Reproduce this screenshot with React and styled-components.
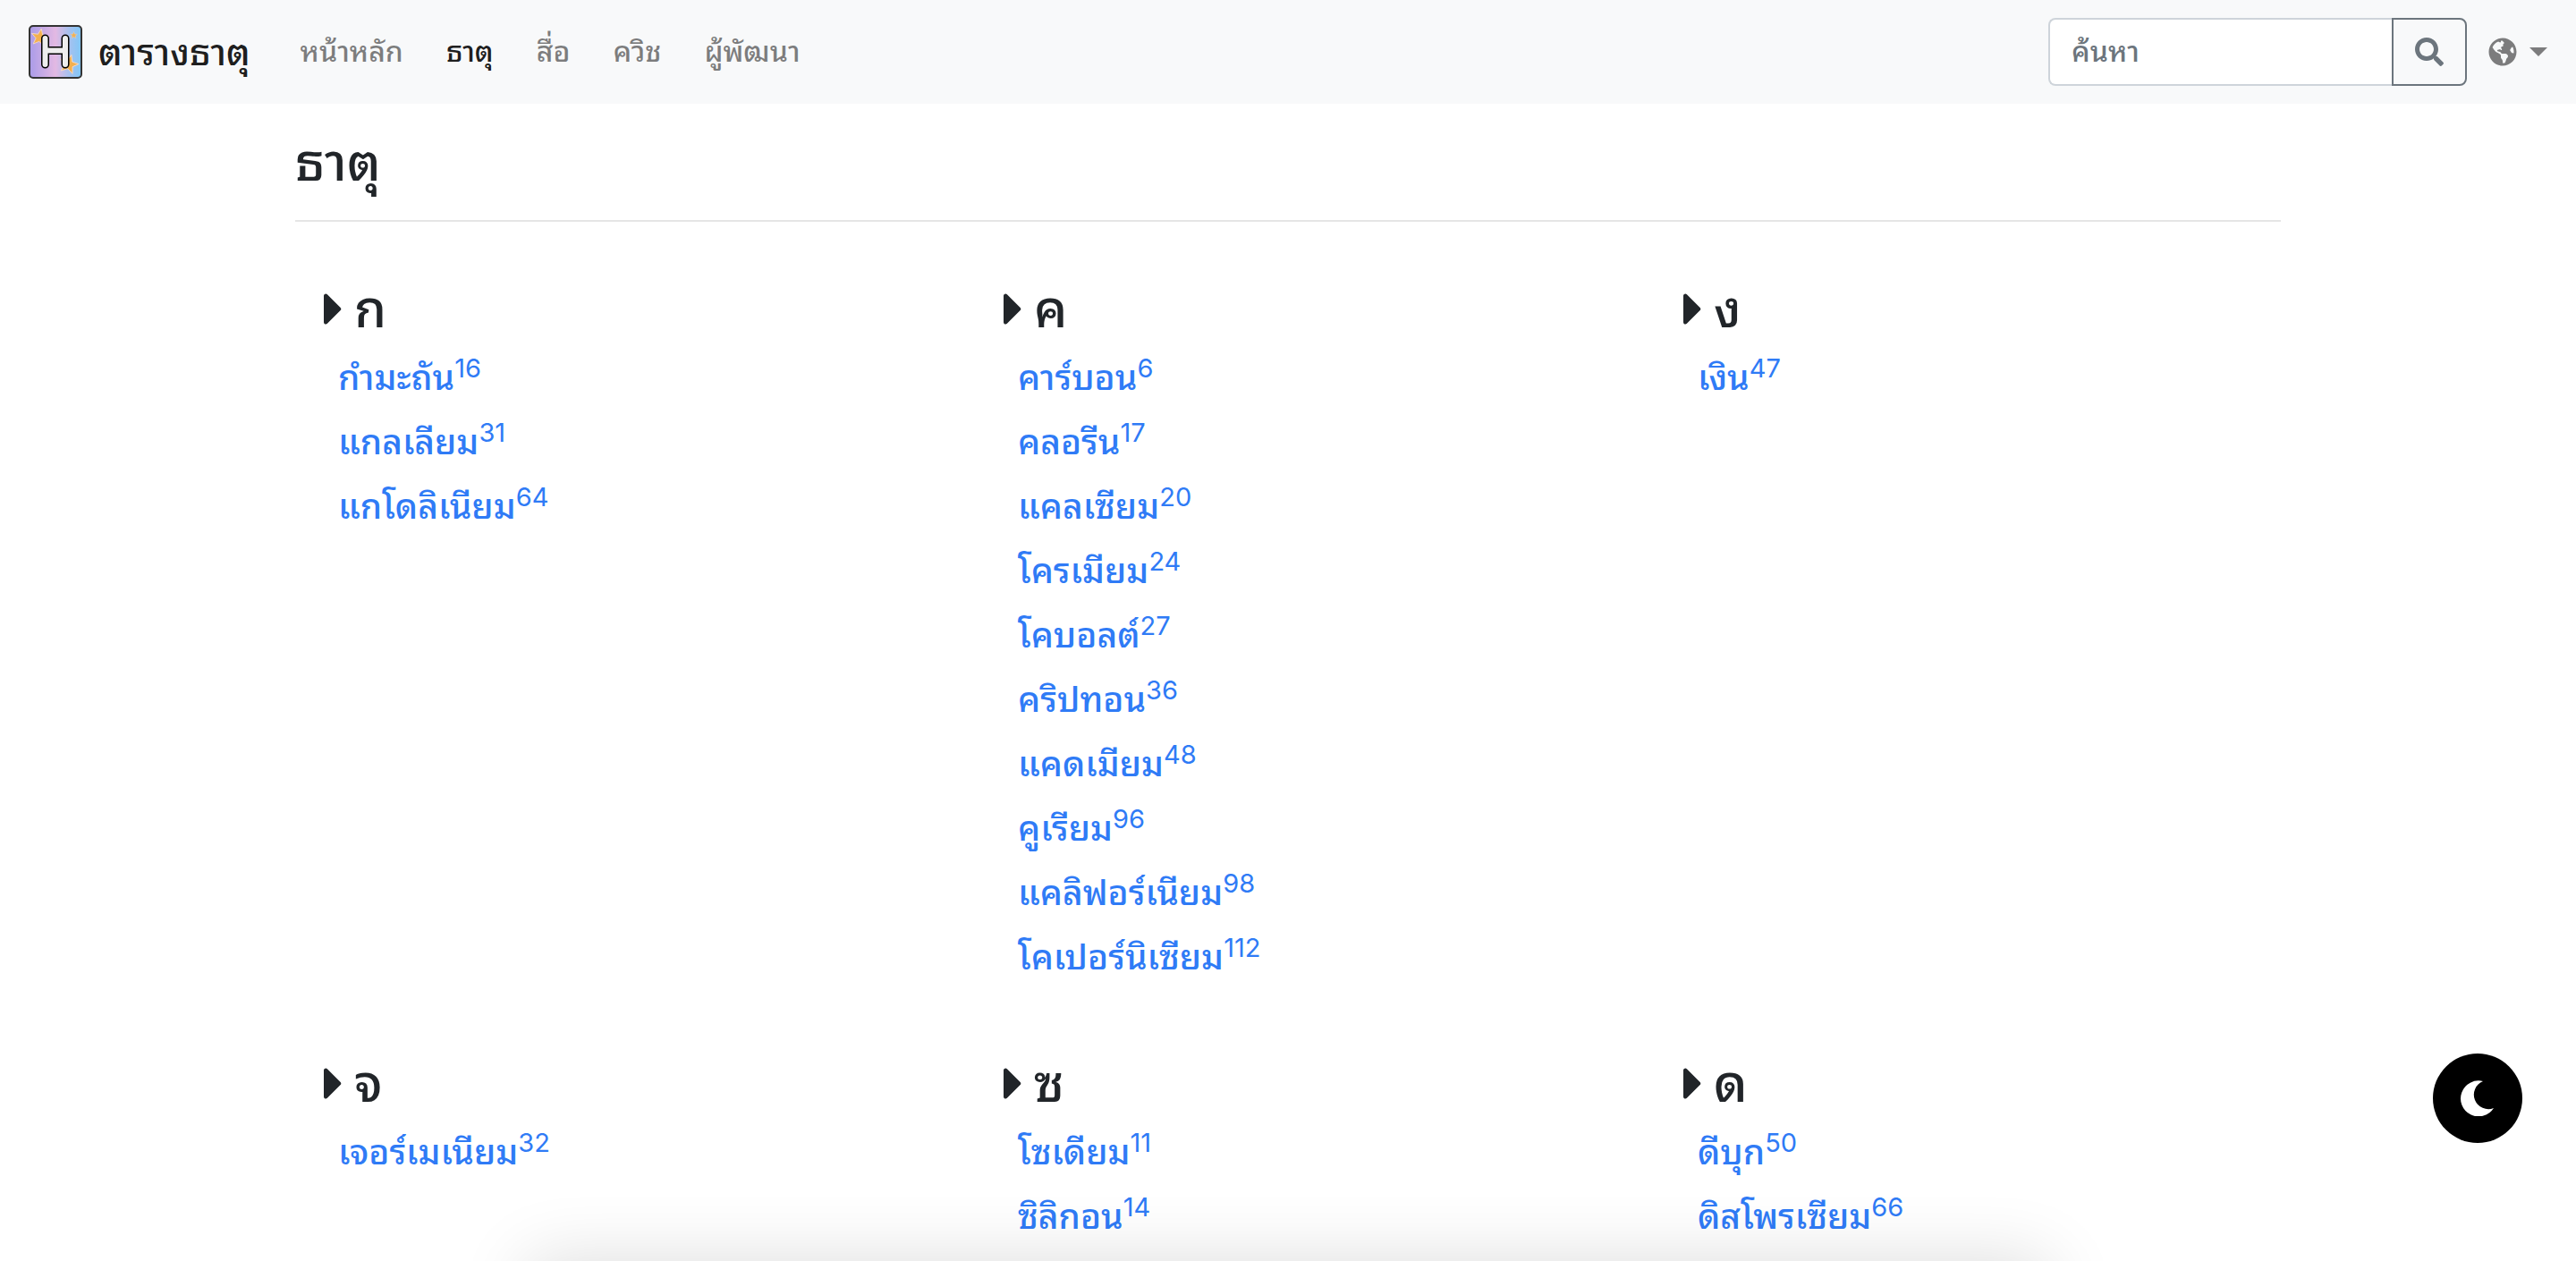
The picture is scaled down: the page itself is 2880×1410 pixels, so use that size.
import React from "react";
import styled, { createGlobalStyle } from "styled-components";
import { FaCaretRight, FaSearch, FaGlobeAmericas } from "react-icons/fa";

const Global = createGlobalStyle`
  *, *::before, *::after { box-sizing: border-box; }
  html { background: #fff; }
  body {
    margin: 0;
    height: 100vh;
    overflow: hidden;
    color: #212529;
    font: 500 32px/48px Inter, "Noto Sans Thai Looped", Thonburi, Loma, "Noto Sans Thai", "Noto Sans", sans-serif;
  }
`;

const Navbar = styled.nav`
  display: flex;
  align-items: center;
  height: 116px;
  padding: 0 32px;
  background: #f8f9fa;
`;
const Brand = styled.a`
  display: flex;
  align-items: center;
  gap: 18px;
  margin-right: 32px;
  color: rgba(0, 0, 0, 0.9);
  font-size: 41px;
  line-height: 60px;
  text-decoration: none;
`;
const Logo = styled.svg`
  width: 60px;
  height: 60px;
`;
const NavList = styled.ul`
  display: flex;
  flex: 1;
  margin: 0;
  padding: 0;
  list-style: none;
`;
const NavLink = styled.a`
  display: block;
  padding: 16px 24px;
  color: ${(p) => (p.$active ? "rgba(0,0,0,0.9)" : "rgba(0,0,0,0.5)")};
  text-decoration: none;
`;
const Search = styled.form`
  display: flex;
  width: 468px;
  height: 76px;
`;
const SearchInput = styled.input`
  flex: 1;
  min-width: 0;
  padding: 12px 24px;
  border: 2px solid #ced4da;
  border-right: 0;
  border-radius: 8px 0 0 8px;
  background: #fff;
  font: inherit;
  &::placeholder { color: #6c757d; opacity: 1; }
`;
const SearchButton = styled.button`
  display: grid;
  place-items: center;
  width: 84px;
  padding: 0;
  border: 2px solid #6c757d;
  border-radius: 0 8px 8px 0;
  background: transparent;
  color: #6c757d;
  font-size: 32px;
`;
const Language = styled.button`
  display: flex;
  align-items: center;
  gap: 14px;
  margin-left: 24px;
  padding: 0;
  border: 0;
  background: none;
  color: rgba(0, 0, 0, 0.5);
  font-size: 32px;
  &::after {
    content: "";
    border: 10px solid transparent;
    border-top-color: currentColor;
    border-bottom: 0;
  }
`;
const Main = styled.main`
  max-width: 2280px;
  margin: 0 auto;
  padding: 0 30px;
`;
const Title = styled.h1`
  margin: 0;
  padding: 32px 0;
  border-bottom: 2px solid #e5e5e5;
  font-size: 58px;
  font-weight: 500;
  line-height: 66px;
`;
const Groups = styled.div`
  display: grid;
  grid-template-columns: repeat(3, 1fr);
  row-gap: 66px;
  margin: 64px -30px 0;
`;
const Group = styled.section`
  padding: 0 60px;
`;
const Letter = styled.h2`
  display: flex;
  align-items: center;
  gap: 12px;
  margin: 0 0 14px;
  padding-left: 2px;
  font-size: 58px;
  font-weight: 500;
  line-height: 66px;
`;
const Caret = styled(FaCaretRight)`
  width: 22px;
  height: 59px;
`;
const Elements = styled.ul`
  margin: 0;
  padding: 0 0 0 18px;
  list-style: none;
`;
const Element = styled.li`
  height: 72px;
  font-size: 39px;
  line-height: 60px;
`;
const ElementLink = styled.a`
  color: #2f7bf6;
  text-decoration: none;
`;
const Number = styled.sup`
  position: relative;
  top: -14px;
  font-size: 29px;
  font-weight: 400;
  line-height: 0;
  vertical-align: baseline;
`;
const ThemeToggle = styled.button`
  position: fixed;
  right: 60px;
  bottom: 132px;
  display: grid;
  place-items: center;
  width: 100px;
  height: 100px;
  padding: 0;
  border: 0;
  border-radius: 50%;
  background: #000;
`;
const BottomShade = styled.div`
  position: fixed;
  right: 590px;
  bottom: -200px;
  left: 590px;
  height: 200px;
  box-shadow: 0 0 80px rgba(0, 0, 0, 0.14);
`;

const links = ["หน้าหลัก", "ธาตุ", "สื่อ", "ควิช", "ผู้พัฒนา"];

const groups = [
  ["ก", [["กำมะถัน", 16], ["แกลเลียม", 31], ["แกโดลิเนียม", 64]]],
  ["ค", [
    ["คาร์บอน", 6], ["คลอรีน", 17], ["แคลเซียม", 20], ["โครเมียม", 24], ["โคบอลต์", 27],
    ["คริปทอน", 36], ["แคดเมียม", 48], ["คูเรียม", 96], ["แคลิฟอร์เนียม", 98], ["โคเปอร์นิเซียม", 112],
  ]],
  ["ง", [["เงิน", 47]]],
  ["จ", [["เจอร์เมเนียม", 32]]],
  ["ซ", [["โซเดียม", 11], ["ซิลิกอน", 14]]],
  ["ด", [["ดีบุก", 50], ["ดิสโพรเซียม", 66]]],
];

const star = "M0-10 2.6-3.4 9.6-3 4.2 1.4 6 8.2 0 4.4-6 8.2-4.2 1.4-9.6-3-2.6-3.4Z";

function LogoMark() {
  return (
    <Logo viewBox="0 0 60 60" aria-hidden="true">
      <defs>
        <linearGradient id="sky">
          <stop offset="0" stopColor="#a99be8" />
          <stop offset="0.5" stopColor="#e3b9e3" />
          <stop offset="0.75" stopColor="#a9c0ee" />
          <stop offset="1" stopColor="#7fc8f8" />
        </linearGradient>
      </defs>
      <rect x="1" y="1" width="58" height="58" rx="4" fill="url(#sky)" stroke="#333" strokeWidth="2" />
      <g fill="#f3b04f" stroke="#f6dcc8" strokeWidth="0.8">
        <path d={star} transform="translate(12.500 14) rotate(10)" />
        <path d={star} transform="translate(45 44) rotate(15) scale(1.100)" />
        <path d={star} transform="translate(50.500 11.500) scale(0.400)" />
      </g>
      <g fill="none" strokeLinecap="round" strokeLinejoin="round">
        <path d="M18.500 15v29M41 15v29M18.500 28.500H41" stroke="#000" strokeWidth="9" />
        <path d="M18.500 15v29M41 15v29M18.500 28.500H41" stroke="#eee" strokeWidth="6" />
      </g>
    </Logo>
  );
}

export default function App() {
  return (
    <>
      <Global />
      <Navbar>
        <Brand href="#"><LogoMark />ตารางธาตุ</Brand>
        <NavList>
          {links.map((text, i) => (
            <li key={text}><NavLink href="#" $active={i === 1}>{text}</NavLink></li>
          ))}
        </NavList>
        <Search>
          <SearchInput type="search" placeholder="ค้นหา" aria-label="ค้นหา" />
          <SearchButton type="button" aria-label="ค้นหา"><FaSearch /></SearchButton>
        </Search>
        <Language type="button" aria-label="ภาษา"><FaGlobeAmericas /></Language>
      </Navbar>
      <Main>
        <Title>ธาตุ</Title>
        <Groups>
          {groups.map(([letter, items]) => (
            <Group key={letter}>
              <Letter><Caret aria-hidden="true" />{letter}</Letter>
              <Elements>
                {items.map(([name, number]) => (
                  <Element key={name}>
                    <ElementLink href="#">{name}<Number>{number}</Number></ElementLink>
                  </Element>
                ))}
              </Elements>
            </Group>
          ))}
        </Groups>
      </Main>
      <BottomShade />
      <ThemeToggle type="button" aria-label="โหมดมืด">
        <svg width="40" height="40" viewBox="0 0 40 40" aria-hidden="true">
          <path d="M26 1A20 20 0 1 0 38 31 15 15 0 0 1 26 1Z" fill="#fff" />
        </svg>
      </ThemeToggle>
    </>
  );
}
